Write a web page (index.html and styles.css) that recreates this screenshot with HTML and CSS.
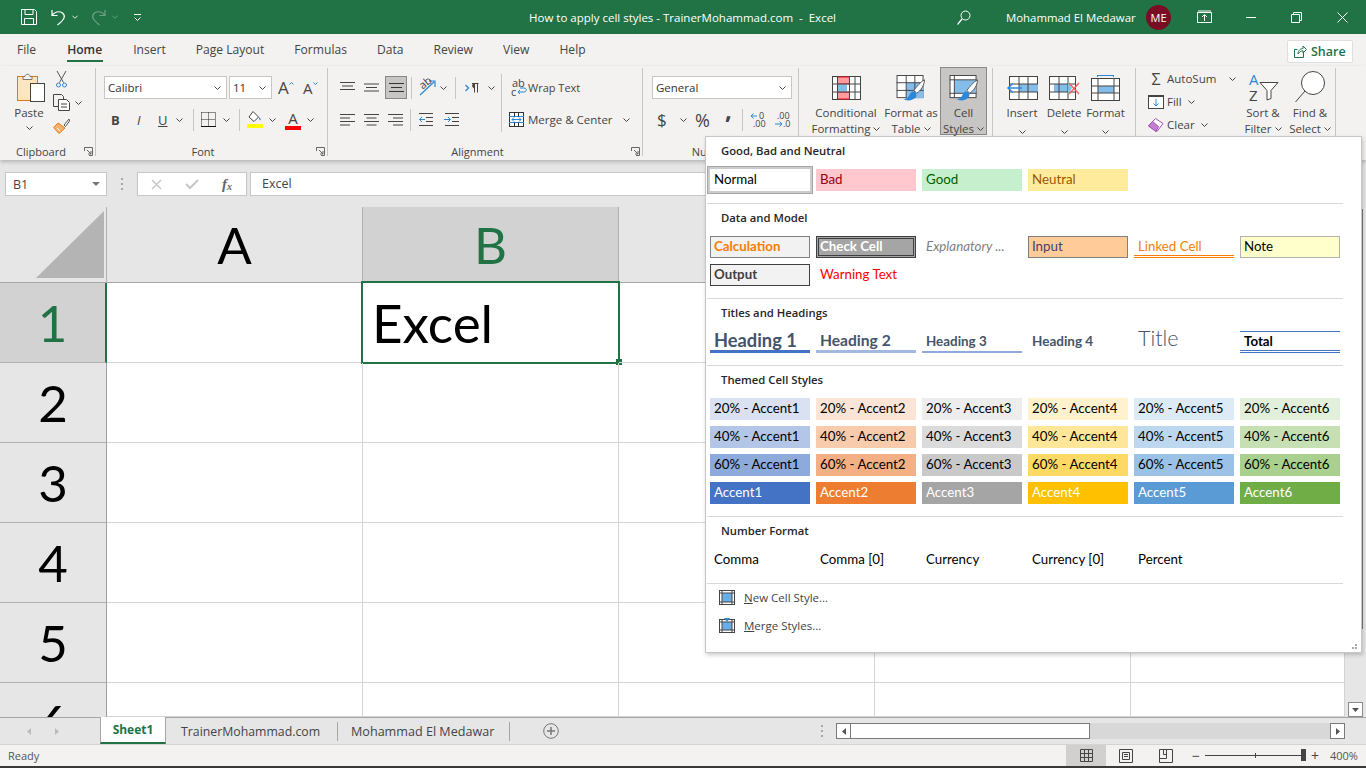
FILE: index.html
```html
<!DOCTYPE html>
<html lang="en">
<head>
<meta charset="utf-8">
<title>How to apply cell styles - Excel</title>
<link rel="stylesheet" href="styles.css">
</head>
<body>
<svg class="sprite" width="0" height="0">
  <symbol id="chev" viewBox="0 0 7 4"><path d="M.5.5l3 3 3-3" fill="none" stroke="#444" stroke-width="1"/></symbol>
  <symbol id="launch" viewBox="0 0 9 9"><path d="M.5 4V.5h8v8H5M3 3l4 4M7 4v3H4" fill="none" stroke="#666"/></symbol>
  <symbol id="lines-l" viewBox="0 0 15 13"><path d="M0 1.5h15M0 5h10M0 8.500h15M0 12h10" stroke="#444" fill="none"/></symbol>
  <symbol id="lines-c" viewBox="0 0 15 13"><path d="M0 1.500h15M2.500 5h10M0 8.500h15M2.500 12h10" stroke="#444" fill="none"/></symbol>
  <symbol id="lines-r" viewBox="0 0 15 13"><path d="M0 1.500h15M5 5h10M0 8.500h15M5 12h10" stroke="#444" fill="none"/></symbol>
</svg>

<header class="titlebar">
  <div class="qat">
    <svg width="16" height="16" viewBox="0 0 16 16"><path d="M.5.5h13l2 2v13H.5zM4 .5v5h8v-5M3.500 15.500v-6h9v6" fill="none" stroke="#fff"/></svg>
    <svg class="q-undo" width="15" height="17" viewBox="0 0 15 17"><path d="M1 1v5.500h5.500M1 6.500C3 3 8 1.500 11.500 4c3 2.500 3 6-5 12" fill="none" stroke="#fff" stroke-width="1.200"/></svg>
    <svg class="q-c" width="6" height="4" viewBox="0 0 7 4"><path d="M.5.500l3 3 3-3" fill="none" stroke="#fff"/></svg>
    <svg class="q-redo" width="15" height="17" viewBox="0 0 15 17"><path d="M14 1v5.500H8.500M14 6.500C12 3 7 1.500 3.500 4c-3 2.500-3 6 5 12" fill="none" stroke="#6ea287" stroke-width="1.200"/></svg>
    <svg class="q-c" width="6" height="4" viewBox="0 0 7 4"><path d="M.5.500l3 3 3-3" fill="none" stroke="#6ea287"/></svg>
    <svg class="q-more" width="7" height="7" viewBox="0 0 7 7"><path d="M0 .5h7M.5 3.500l3 3 3-3" fill="none" stroke="#fff"/></svg>
  </div>
  <div class="doc-title">How to apply cell styles - TrainerMohammad.com&nbsp; -&nbsp; Excel</div>
  <svg class="t-search" width="14" height="15" viewBox="0 0 14 15"><circle cx="8.500" cy="5.500" r="4.500" fill="none" stroke="#fff"/><path d="M5 9l-4.500 5.500" stroke="#fff" fill="none" stroke-width="1.200"/></svg>
  <div class="user">Mohammad El Medawar</div>
  <div class="avatar">ME</div>
  <svg class="t-disp" width="15" height="13" viewBox="0 0 15 13"><path d="M.5 2.500h14v10H.5zM1 1h13" fill="none" stroke="#fff"/><path d="M7.500 11V5M5 7l2.500-2.500L10 7" fill="none" stroke="#fff"/></svg>
  <svg class="t-min" width="10" height="1" viewBox="0 0 10 1"><path d="M0 .5h10" stroke="#fff"/></svg>
  <svg class="t-res" width="11" height="11" viewBox="0 0 11 11"><path d="M.5 2.500h8v8h-8zM2.500 2.500v-2h8v8h-2" fill="none" stroke="#fff"/></svg>
  <svg class="t-close" width="11" height="11" viewBox="0 0 11 11"><path d="M.5.500l10 10M10.500.500l-10 10" fill="none" stroke="#fff"/></svg>
</header>

<nav class="tabs">
  <span class="tab">File</span>
  <span class="tab active">Home</span>
  <span class="tab">Insert</span>
  <span class="tab">Page Layout</span>
  <span class="tab">Formulas</span>
  <span class="tab">Data</span>
  <span class="tab">Review</span>
  <span class="tab">View</span>
  <span class="tab">Help</span>
  <span class="share">
    <svg width="13" height="13" viewBox="0 0 13 13"><path d="M9.500 6.500v6h-9v-8h3M4 9c0-4 3-5.500 5-5.500V1l3.500 3.500L9 8V5.800C7 5.800 5.500 7 4 9z" fill="none" stroke="#217346"/></svg>
    Share
  </span>
</nav>

<section class="ribbon">
  <div class="group g-clip">
    <div class="body">
      <div class="big paste">
        <svg width="28" height="31" viewBox="0 0 28 31"><rect x=".5" y="4.500" width="20" height="24" fill="#fbe6bd" stroke="#d8791c"/><path d="M6 4.500h2c0-3 5-3 5 0h2v3H6z" fill="#f3f2f1" stroke="#777"/><rect x="13.500" y="11.500" width="14" height="18" fill="#fff" stroke="#444"/></svg>
        <span class="lbl">Paste</span>
        <svg class="chev" aria-hidden="true"><use href="#chev"/></svg>
      </div>
      <div class="clip-tools">
        <svg class="cut" width="11" height="17" viewBox="0 0 11 17"><path d="M1 0l6.500 11.500M10 0L3.500 11.500" stroke="#555" fill="none"/><circle cx="2.500" cy="14" r="2" fill="none" stroke="#2b88d8"/><circle cx="8.500" cy="14" r="2" fill="none" stroke="#2b88d8"/></svg>
        <div class="copy"><svg width="17" height="17" viewBox="0 0 17 17"><path d="M.5.500h8l2 2v3M.5.500v12h5" fill="none" stroke="#444"/><path d="M5.500 5.500h8l3 3v8h-11z" fill="#fff" stroke="#444"/><path d="M8 10h6M8 13h6" stroke="#444" fill="none"/></svg><svg class="chev"><use href="#chev"/></svg></div>
        <svg class="painter" width="17" height="16" viewBox="0 0 17 16"><path d="M16 1l-5 6 1.500 1.500L16.500 3z" fill="#fff" stroke="#555"/><path d="M5 5l7 5-6 5.500-5.500-6z" fill="#f6b26b" stroke="#e07c1a"/><path d="M4 10l3 3" stroke="#fff" fill="none"/></svg>
      </div>
    </div>
    <div class="glabel"><span class="gl-text gl-clip">Clipboard</span><svg class="launch"><use href="#launch"/></svg></div>
  </div>

  <div class="group g-font">
    <div class="body stack">
      <div class="row r-top">
        <div class="combo c-font"><span>Calibri</span><svg class="chev"><use href="#chev"/></svg></div>
        <div class="combo c-size"><span>11</span><svg class="chev"><use href="#chev"/></svg></div>
        <span class="grow">A<svg width="5" height="3" viewBox="0 0 5 3"><path d="M.5 2.500l2-2 2 2" fill="none" stroke="#2b88d8"/></svg></span>
        <span class="shrink">A<svg width="5" height="3" viewBox="0 0 5 3"><path d="M.5.500l2 2 2-2" fill="none" stroke="#2b88d8"/></svg></span>
      </div>
      <div class="row r-bot">
        <b class="f-b">B</b><i class="f-i">I</i><u class="f-u">U</u><svg class="chev f-uc"><use href="#chev"/></svg>
        <span class="vsep s-a"></span>
        <svg class="f-bord" width="15" height="15" viewBox="0 0 15 15"><path d="M.5.500h14M.5 7.500h14M.5.500v14M7.500.500v14M14.500.500v14" stroke="#222" stroke-dasharray="1 1" fill="none"/><path d="M0 14.500h15" stroke="#111"/></svg><svg class="chev f-bc"><use href="#chev"/></svg>
        <span class="vsep s-b"></span>
        <svg class="f-fill" width="16" height="17" viewBox="0 0 16 17"><path d="M6 .5l5.500 5.500L7 10.500 2 6z" fill="#fff" stroke="#444"/><path d="M12 6c1 1 2 2 1.500 3S12 8 12 6z" fill="#2b6cb0"/><rect y="13" width="16" height="4" fill="#ffff00"/></svg><svg class="chev f-fc"><use href="#chev"/></svg>
        <span class="f-col">A<span class="redbar"></span></span><svg class="chev f-cc"><use href="#chev"/></svg>
      </div>
    </div>
    <div class="glabel"><span class="gl-text gl-font">Font</span><svg class="launch"><use href="#launch"/></svg></div>
  </div>

  <div class="group g-align">
    <div class="body">
      <div class="stack">
        <div class="row r-top al-row">
          <svg class="al" width="15" height="12" viewBox="0 0 15 12"><path d="M0 .5h15M2 4h11M0 7.500h15" stroke="#444" fill="none"/></svg>
          <svg class="al al2" width="15" height="13" viewBox="0 0 15 13"><path d="M0 3h15M2 6.500h11M0 10h15" stroke="#444" fill="none"/></svg>
          <span class="al-sel"><svg width="15" height="11" viewBox="0 0 15 11"><path d="M0 1.500h15M2 5.500h11M0 9.500h15" stroke="#333" fill="none"/></svg></span>
          <span class="vsep s-c"></span>
          <svg class="orient" width="17" height="17" viewBox="0 0 17 17"><path d="M1 16L15 3M10 2h6v6" stroke="#2b88d8" fill="none" stroke-width="1.200"/><text x="1" y="9" class="mini" transform="rotate(-40 5 6)">ab</text></svg>
          <svg class="chev a-c1"><use href="#chev"/></svg>
          <span class="vsep s-d"></span>
          <svg class="rtl" width="14" height="10" viewBox="0 0 14 10"><path d="M.5 2l3 3-3 3" stroke="#2b88d8" fill="none" stroke-width="1.300"/><path d="M7 .5h6.500M9.500.5v9M12.500.5v9M9.500 5C7 5 7 .5 9.500.5z" stroke="#444" fill="#444"/></svg>
          <svg class="chev a-c2"><use href="#chev"/></svg>
        </div>
        <div class="row r-bot al-row">
          <svg class="al" width="15" height="13"><use href="#lines-l"/></svg>
          <svg class="al al2" width="15" height="13"><use href="#lines-c"/></svg>
          <svg class="al al3" width="15" height="13"><use href="#lines-r"/></svg>
          <span class="vsep s-e"></span>
          <svg class="ind" width="15" height="13" viewBox="0 0 15 13"><path d="M0 .5h14M7 4.500h7M7 8.500h7M0 12.500h14" stroke="#444" fill="none"/><path d="M6 6.500H.5M3 4L.5 6.500 3 9" stroke="#2b88d8" fill="none"/></svg>
          <svg class="ind ind2" width="15" height="13" viewBox="0 0 15 13"><path d="M1 .5h14M8 4.500h7M8 8.500h7M1 12.500h14" stroke="#444" fill="none"/><path d="M0 6.500h6M4 4l2.500 2.500L4 9" stroke="#2b88d8" fill="none"/></svg>
        </div>
      </div>
      <span class="vsep tall"></span>
      <div class="stack wm">
        <div class="row r-top wrap">
          <svg width="17" height="18" viewBox="0 0 17 18"><text x="1" y="8" class="mini">ab</text><text x="0" y="17" class="mini">c</text><path d="M7 13h6c3 0 3-4 0-4H9M9 11l-2 2 2 2" stroke="#2b88d8" fill="none"/></svg>
          <span class="lbl wm-t w-t">Wrap Text</span>
        </div>
        <div class="row r-bot merge">
          <svg width="15" height="15" viewBox="0 0 15 15"><rect x=".5" y=".5" width="14" height="14" fill="#fff" stroke="#333"/><path d="M0 4.500h15M0 10.500h15" stroke="#2b88d8"/><path d="M5.500.5v4M9.500.5v4M5.500 10.500v4M9.500 10.500v4" stroke="#333"/><path d="M3 7.500h9M5 5.500l-2 2 2 2M10 5.500l2 2-2 2" stroke="#2b88d8" fill="none"/></svg>
          <span class="lbl wm-t">Merge &amp; Center</span>
          <svg class="chev m-c"><use href="#chev"/></svg>
        </div>
      </div>
    </div>
    <div class="glabel"><span class="gl-text gl-al">Alignment</span><svg class="launch"><use href="#launch"/></svg></div>
  </div>

  <div class="group g-num">
    <div class="body stack">
      <div class="row r-top">
        <div class="combo c-num"><span>General</span><svg class="chev"><use href="#chev"/></svg></div>
      </div>
      <div class="row r-bot n-row">
        <span class="dollar">$</span><svg class="chev n-c"><use href="#chev"/></svg>
        <span class="pct">%</span>
        <span class="comma">,</span>
        <span class="vsep s-n"></span>
        <svg class="dec" width="16" height="16" viewBox="0 0 16 16"><path d="M1 4h6M3.500 1.500L1 4l2.500 2.500" stroke="#2b88d8" fill="none"/><text x="9" y="7" class="mini2">0</text><text x="3" y="15" class="mini2">.00</text></svg>
        <svg class="dec d2" width="16" height="16" viewBox="0 0 16 16"><text x="3" y="7" class="mini2">.00</text><path d="M1 12h7M5.500 9.500L8 12l-2.500 2.500" stroke="#2b88d8" fill="none"/><text x="9" y="15" class="mini2">.0</text></svg>
      </div>
    </div>
    <div class="glabel"><span class="gl-text gl-num">Number</span></div>
  </div>

  <div class="group g-styles">
    <div class="body big-row">
      <div class="big b-cf">
        <svg width="29" height="24" viewBox="0 0 29 24"><rect x=".5" y=".5" width="28" height="23" fill="#fff" stroke="#444"/><rect x="5.500" y="1" width="12" height="7" fill="#ff9a9f" stroke="#e81123"/><rect x="5.500" y="16" width="12" height="7" fill="#ff9a9f" stroke="#e81123"/><rect x="6" y="8.500" width="9" height="7" fill="#85bdea"/><path d="M0 8h29M0 16h29M5.500 0v24M17.500 0v24M23 0v24" stroke="#444" fill="none"/></svg>
        <span class="lbl">Conditional<br>Formatting <svg class="chev"><use href="#chev"/></svg></span>
      </div>
      <div class="big b-ft">
        <svg width="30" height="27" viewBox="0 0 30 27"><rect x=".5" y=".5" width="27" height="23" fill="#fff" stroke="#444"/><rect x="10" y="8" width="18" height="16" fill="#85bdea"/><path d="M0 8h28M0 16h28M10 0v24M19 0v24" stroke="#444" fill="none"/><path d="M29 5c-4 2-8 7-11 11l3 3c4-3 8-8 8-14z" fill="#fff" stroke="#555"/><path d="M17 17c-3 1-3 4-5 6-1 1-3 2-5 2 3 2 9 2 12-1 2-2 2-4 1-5z" fill="#2b88d8"/></svg>
        <span class="lbl">Format as<br>Table <svg class="chev"><use href="#chev"/></svg></span>
      </div>
      <div class="big b-cs">
        <svg width="30" height="27" viewBox="0 0 30 27"><rect x=".5" y=".5" width="27" height="23" fill="#fff" stroke="#444"/><rect x="5" y="5" width="22" height="14" fill="#85bdea"/><path d="M0 5h28M0 19h28M5 0v24" stroke="#444" fill="none"/><path d="M29 5c-4 2-8 7-11 11l3 3c4-3 8-8 8-14z" fill="#fff" stroke="#555"/><path d="M17 17c-3 1-3 4-5 6-1 1-3 2-5 2 3 2 9 2 12-1 2-2 2-4 1-5z" fill="#2b88d8"/></svg>
        <span class="lbl">Cell<br>Styles <svg class="chev"><use href="#chev"/></svg></span>
      </div>
    </div>
  </div>

  <div class="group g-cells">
    <div class="body big-row">
      <div class="big b-c">
        <svg width="31" height="24" viewBox="0 0 31 24"><rect x="2.500" y=".5" width="28" height="23" fill="#fff" stroke="#444"/><rect x="12" y="8" width="19" height="8" fill="#85bdea"/><path d="M2 8h29M2 16h29M12 0v24M21 0v24" stroke="#444" fill="none"/><path d="M1 12h14M6 7.500L1 12l5 4.500" stroke="#2b88d8" stroke-width="1.500" fill="#fff"/></svg>
        <span class="lbl">Insert</span><svg class="chev"><use href="#chev"/></svg>
      </div>
      <div class="big b-c">
        <svg width="31" height="24" viewBox="0 0 31 24"><rect x=".5" y=".5" width="26" height="23" fill="#fff" stroke="#444"/><rect x="5" y="8" width="14" height="8" fill="#85bdea"/><path d="M0 8h27M0 16h27M10 0v24M19 0v24" stroke="#444" fill="none"/><path d="M19 6l4 6-4 6z" fill="#85bdea"/><path d="M20 7l10 11M30 7L20 18" stroke="#ff5a5a" fill="none" stroke-width="1.300"/></svg>
        <span class="lbl">Delete</span><svg class="chev"><use href="#chev"/></svg>
      </div>
      <div class="big b-c b-last">
        <svg width="29" height="26" viewBox="0 0 29 26"><path d="M6 .5h17M6.500 0v2M22.500 0v2" stroke="#2b88d8" fill="none"/><rect x=".5" y="3.500" width="28" height="22" fill="#fff" stroke="#444"/><rect x="7" y="11" width="16" height="7" fill="#85bdea"/><path d="M0 11h29M0 18h29M7 3v23M23 3v23" stroke="#444" fill="none"/></svg>
        <span class="lbl">Format</span><svg class="chev"><use href="#chev"/></svg>
      </div>
    </div>
  </div>

  <div class="group g-edit">
    <div class="body">
      <div class="ed-list">
        <div class="ed ed1"><span class="sigma">&Sigma;</span><span class="lbl">AutoSum</span><svg class="chev a-sum"><use href="#chev"/></svg></div>
        <div class="ed ed2"><svg width="16" height="14" viewBox="0 0 16 14"><rect x=".5" y=".5" width="15" height="13" fill="#fff" stroke="#444"/><path d="M0 1.500h16" stroke="#444"/><path d="M8 4v7M5.500 8.500L8 11l2.500-2.500" stroke="#2b88d8" fill="none"/></svg><span class="lbl">Fill</span><svg class="chev"><use href="#chev"/></svg></div>
        <div class="ed ed3"><svg width="16" height="14" viewBox="0 0 16 14"><path d="M.5 8l7-7.500 7.500 5-6 8z" fill="#fff" stroke="#a44fb7"/><path d="M.5 8l4-4.500 6 5-2.500 5z" fill="#c47fd1" stroke="#a44fb7"/></svg><span class="lbl">Clear</span><svg class="chev"><use href="#chev"/></svg></div>
      </div>
      <div class="big b-sf">
        <svg width="31" height="30" viewBox="0 0 31 30"><text x="1" y="13" class="az">A</text><text x="1" y="29" class="az2">Z</text><path d="M12 10.500h18l-7 8v8l-4 1.500V18.500z" fill="#fff" stroke="#444"/></svg>
        <span class="lbl">Sort &amp;<br>Filter <svg class="chev"><use href="#chev"/></svg></span>
      </div>
      <div class="big b-fs">
        <svg width="30" height="32" viewBox="0 0 30 32"><circle cx="18" cy="12" r="11.500" fill="#fff" stroke="#444"/><path d="M10 20L.5 31" stroke="#444" fill="none"/></svg>
        <span class="lbl">Find &amp;<br>Select <svg class="chev"><use href="#chev"/></svg></span>
      </div>
    </div>
  </div>
</section>

<section class="formula">
  <div class="namebox"><span>B1</span><svg width="8" height="4" viewBox="0 0 8 4"><path d="M0 0h8L4 4z" fill="#777"/></svg></div>
  <div class="vdots"><i></i><i></i><i></i></div>
  <div class="fbtns">
    <svg width="11" height="11" viewBox="0 0 11 11"><path d="M1 1l9 9M10 1l-9 9" stroke="#c8c8c8" stroke-width="1.500" fill="none"/></svg>
    <svg width="14" height="11" viewBox="0 0 14 11"><path d="M1 5l4 4 8-8" stroke="#c8c8c8" stroke-width="2" fill="none"/></svg>
    <span class="fx">f<sub>x</sub></span>
  </div>
  <div class="finput">Excel</div>
</section>

<main class="workarea">
  <div class="sheet">
    <div class="corner"><svg width="68" height="67" viewBox="0 0 68 67"><path d="M0 67L68 0v67z" fill="#b4b4b4"/></svg></div>
    <div class="ch">A</div><div class="ch sel-col">B</div><div class="ch">C</div><div class="ch">D</div><div class="ch">E</div>
    <div class="rh sel-row">1</div><div class="cell"></div><div class="cell b1">Excel<div class="sel"><span class="handle"></span></div></div><div class="cell"></div><div class="cell"></div><div class="cell"></div>
    <div class="rh">2</div><div class="cell"></div><div class="cell"></div><div class="cell"></div><div class="cell"></div><div class="cell"></div>
    <div class="rh">3</div><div class="cell"></div><div class="cell"></div><div class="cell"></div><div class="cell"></div><div class="cell"></div>
    <div class="rh">4</div><div class="cell"></div><div class="cell"></div><div class="cell"></div><div class="cell"></div><div class="cell"></div>
    <div class="rh">5</div><div class="cell"></div><div class="cell"></div><div class="cell"></div><div class="cell"></div><div class="cell"></div>
    <div class="rh">6</div><div class="cell"></div><div class="cell"></div><div class="cell"></div><div class="cell"></div><div class="cell"></div>
  </div>
  <div class="vscroll">
    <div class="v-thumb"></div>
    <div class="v-btn"><svg width="7" height="4" viewBox="0 0 7 4"><path d="M0 0h7L3.500 4z" fill="#555"/></svg></div>
  </div>
</main>

<section class="sheetbar">
  <div class="navs">
    <svg width="4" height="7" viewBox="0 0 4 7"><path d="M4 0v7L0 3.500z" fill="#bbb"/></svg>
    <svg width="4" height="7" viewBox="0 0 4 7"><path d="M0 0v7l4-3.500z" fill="#bbb"/></svg>
  </div>
  <div class="stab on">Sheet1</div>
  <div class="stab s2">TrainerMohammad.com</div>
  <div class="stab s3">Mohammad El Medawar</div>
  <svg class="plus" width="16" height="16" viewBox="0 0 16 16"><circle cx="8" cy="8" r="7.300" fill="none" stroke="#777"/><path d="M8 4v8M4 8h8" stroke="#777" stroke-width="1.500"/></svg>
  <div class="vdots v2"><i></i><i></i><i></i></div>
  <div class="hscroll">
    <div class="h-btn"><svg width="4" height="7" viewBox="0 0 4 7"><path d="M4 0v7L0 3.500z" fill="#555"/></svg></div>
    <div class="h-thumb"></div>
    <div class="h-track"></div>
    <div class="h-btn"><svg width="4" height="7" viewBox="0 0 4 7"><path d="M0 0v7l4-3.500z" fill="#555"/></svg></div>
  </div>
</section>

<footer class="status">
  <span class="ready">Ready</span>
  <div class="viewbtn on"><svg width="13" height="13" viewBox="0 0 13 13"><path d="M.5.500h12v12H.5zM4.500.500v12M8.500.500v12M.5 4.500h12M.5 8.500h12" fill="none" stroke="#444"/></svg></div>
  <div class="viewbtn"><svg width="14" height="14" viewBox="0 0 14 14"><path d="M.5.500h13v13H.5zM3.500 3.500h7v7h-7zM5 5.500h4M5 7.500h4" fill="none" stroke="#444"/></svg></div>
  <div class="viewbtn"><svg width="14" height="14" viewBox="0 0 14 14"><path d="M.5.500h13v13H.5zM.5 9.500h7v-9M7.500 5.500h-3M4.500.500v5" fill="none" stroke="#444"/></svg></div>
  <span class="zm">&minus;</span>
  <div class="slider"><span class="tick"></span><span class="knob"></span></div>
  <span class="zm zp">+</span>
  <span class="pctz">400%</span>
</footer>
<div class="baseline"></div>

<aside class="gallery">
  <div class="sec">
    <h4>Good, Bad and Neutral</h4>
    <div class="tiles">
      <div class="t t-normal">Normal</div><div class="t t-bad">Bad</div><div class="t t-good">Good</div><div class="t t-neutral">Neutral</div>
    </div>
  </div>
  <div class="sec">
    <h4>Data and Model</h4>
    <div class="tiles">
      <div class="t t-calc">Calculation</div><div class="t t-check"><span>Check Cell</span></div><div class="t t-expl">Explanatory ...</div><div class="t t-input">Input</div><div class="t t-linked">Linked Cell</div><div class="t t-note">Note</div>
      <div class="t t-output">Output</div><div class="t t-warn">Warning Text</div>
    </div>
  </div>
  <div class="sec">
    <h4>Titles and Headings</h4>
    <div class="tiles">
      <div class="t t-h1">Heading 1</div><div class="t t-h2">Heading 2</div><div class="t t-h3">Heading 3</div><div class="t t-h4">Heading 4</div><div class="t t-title">Title</div><div class="t t-total">Total</div>
    </div>
  </div>
  <div class="sec">
    <h4>Themed Cell Styles</h4>
    <div class="tiles">
      <div class="t a1-20">20% - Accent1</div><div class="t a2-20">20% - Accent2</div><div class="t a3-20">20% - Accent3</div><div class="t a4-20">20% - Accent4</div><div class="t a5-20">20% - Accent5</div><div class="t a6-20">20% - Accent6</div>
      <div class="t a1-40">40% - Accent1</div><div class="t a2-40">40% - Accent2</div><div class="t a3-40">40% - Accent3</div><div class="t a4-40">40% - Accent4</div><div class="t a5-40">40% - Accent5</div><div class="t a6-40">40% - Accent6</div>
      <div class="t a1-60">60% - Accent1</div><div class="t a2-60">60% - Accent2</div><div class="t a3-60">60% - Accent3</div><div class="t a4-60">60% - Accent4</div><div class="t a5-60">60% - Accent5</div><div class="t a6-60">60% - Accent6</div>
      <div class="t a1">Accent1</div><div class="t a2">Accent2</div><div class="t a3">Accent3</div><div class="t a4">Accent4</div><div class="t a5">Accent5</div><div class="t a6">Accent6</div>
    </div>
  </div>
  <div class="sec">
    <h4>Number Format</h4>
    <div class="tiles">
      <div class="t">Comma</div><div class="t">Comma [0]</div><div class="t">Currency</div><div class="t">Currency [0]</div><div class="t">Percent</div>
    </div>
  </div>
  <div class="menu">
    <div class="mi"><svg width="16" height="15" viewBox="0 0 16 15"><rect x=".5" y=".5" width="15" height="14" fill="#fff" stroke="#444"/><rect x="3" y="3" width="10" height="9" fill="#6aaee8"/><path d="M0 3h16M0 12h16M3 0v15M13 0v15" stroke="#444" fill="none"/></svg><span><u>N</u>ew Cell Style...</span></div>
    <div class="mi"><svg width="16" height="15" viewBox="0 0 16 15"><rect x=".5" y="1.500" width="15" height="13" fill="#fff" stroke="#444"/><rect x="3" y="4" width="10" height="8" fill="#6aaee8"/><path d="M0 4h16M0 12h16M3 1v14M13 1v14" stroke="#444" fill="none"/><path d="M5 0h6L8 4z" fill="#2b88d8"/></svg><span><u>M</u>erge Styles...</span></div>
  </div>
  <svg class="grip" width="8" height="6" viewBox="0 0 8 6"><path d="M5 0h2v2H5zM2 3h2v2H2zM5 3h2v2H5z" fill="#aaa"/></svg>
</aside>
</body>
</html>
```
FILE: styles.css
```css
* { box-sizing: border-box; }
html, body { margin: 0; padding: 0; }
body {
  width: 1366px; height: 768px; overflow: hidden; position: relative;
  display: flex; flex-direction: column;
  font-family: "Open Sans", "Noto Sans", sans-serif; font-size: 11.5px; color: #444;
  background: #f3f2f1;
}
.sprite { position: absolute; }
svg { display: block; flex: none; overflow: visible; }
.chev { width: 7px; height: 4px; }
.lbl .chev { display: inline-block; vertical-align: 2px; }
.lbl { white-space: nowrap; }
.launch { width: 9px; height: 9px; }
.mini { font: 11px "Open Sans", sans-serif; fill: #444; }
.mini2 { font: 9px "Open Sans", sans-serif; fill: #444; }
.az { font: 15px "Open Sans", sans-serif; fill: #2b88d8; }
.az2 { font: 15px "Open Sans", sans-serif; fill: #444; }

/* title bar */
.titlebar { height: 34px; background: #217346; color: #fff; display: flex; align-items: center; flex: none; }
.qat { display: flex; align-items: center; width: 529px; padding-left: 21px; }
.q-undo { margin-left: 14px; }
.q-c { margin-left: 6px; }
.q-redo { margin-left: 13px; }
.q-more { margin-left: 16px; }
.doc-title { width: 428px; font-size: 11.500px; white-space: nowrap; }
.t-search { margin-right: 35px; }
.user { width: 140px; font-size: 11.400px; white-space: nowrap; }
.avatar { width: 25px; height: 25px; border-radius: 50%; background: #7a0c24; font-size: 11px; display: flex; align-items: center; justify-content: center; }
.t-disp { margin-left: 26px; margin-top: -2px; }
.t-min { margin-left: 34px; }
.t-res { margin-left: 35px; }
.t-close { margin-left: 35px; }

/* tabs */
.tabs { height: 32px; flex: none; display: flex; align-items: flex-start; padding: 7px 13px 0 17px; gap: 30px; font-size: 12.100px; color: #444; }
.tab { height: 21px; line-height: 17px; white-space: nowrap; }
.tab.active { font-weight: 600; border-bottom: 2px solid #217346; color: #333; margin-left: 1px; padding-right: 1px; }
.share { margin-left: auto; margin-top: -1px; width: 66px; height: 23px; background: #fff; border: 1px solid #e1dfdd; border-radius: 2px; color: #217346; display: flex; align-items: center; gap: 4px; padding-left: 6px; font-size: 12.500px; font-weight: 600; }

/* ribbon */
.ribbon { height: 94px; flex: none; display: flex; background: #f3f2f1; position: relative; z-index: 2; box-shadow: 0 2px 4px rgba(0,0,0,.22); }
.group { height: 88px; margin-top: 2px; display: flex; flex-direction: column; border-right: 1px solid #c8c6c4; flex: none; }
.body { flex: none; height: 79px; display: flex; }
.stack { display: flex; flex-direction: column; }
.row { display: flex; align-items: center; }
.r-top { height: 23px; margin-top: 8px; }
.r-bot { height: 23px; margin-top: 9px; }
.glabel { height: 9px; display: flex; align-items: center; font-size: 11px; padding-right: 2px; color: #444; white-space: nowrap; }
.gl-text { flex: 1; text-align: center; }
.gl-clip { padding-right: 2px; }
.gl-font { padding-right: 14px; }
.gl-al { padding-right: 16px; }
.gl-num { padding-right: 22px; }
.vsep { width: 1px; height: 22px; background: #c8c6c4; display: block; flex: none; }
.combo { height: 23px; background: #fff; border: 1px solid #c8c6c4; display: flex; align-items: center; justify-content: space-between; padding: 0 5px 0 3px; color: #333; font-size: 11.500px; }

.g-clip { width: 96px; }
.paste { width: 34px; margin-left: 12px; }
.big { display: flex; flex-direction: column; align-items: center; white-space: nowrap; }
.big .lbl { line-height: 16px; text-align: center; }
.paste svg:first-child { margin-top: 4px; margin-bottom: 2px; margin-left: 4px; }
.paste .chev { margin-top: 5px; }
.clip-tools { margin-left: 7px; display: flex; flex-direction: column; padding-top: 3px; }
.cut { margin-left: 3px; }
.copy { display: flex; align-items: center; gap: 5px; margin-top: 6px; }
.painter { margin-left: 0; margin-top: 7px; }

.g-font { width: 232px; padding-left: 8px; }
.c-font { width: 123px; }
.c-size { width: 43px; margin-left: 2px; }
.grow, .shrink { display: flex; align-items: flex-start; font-size: 17px; line-height: 22px; color: #444; }
.grow { margin-left: 6px; width: 25px; }
.shrink { font-size: 15px; width: 20px; }
.grow svg, .shrink svg { margin-top: 5px; }
.f-b { margin-left: 7px; width: 24px; font-size: 13px; color: #444; }
.f-i { width: 23px; font-size: 13px; color: #444; font-style: italic; padding-left: 2px; }
.f-u { width: 18px; font-size: 13px; color: #444; }
.f-uc { margin-left: 0; }
.s-a { margin-left: 10px; }
.f-bord { margin-left: 7px; }
.f-bc { margin-left: 7px; }
.s-b { margin-left: 9px; }
.f-fill { margin-left: 7px; }
.f-fc { margin-left: 6px; }
.f-col { position: relative; margin-left: 9px; width: 16px; text-align: center; font-size: 15px; line-height: 17px; height: 20px; color: #444; }
.redbar { display: block; height: 4px; background: #ff0000; margin-top: -1px; }
.f-cc { margin-left: 6px; }

.g-align { width: 315px; padding-left: 12px; }
.al2 { margin-left: 9px; }
.al3 { margin-left: 9px; }
.al-sel { width: 22px; height: 23px; margin-left: 6px; background: #c8c6c4; border: 1px solid #8a8886; display: flex; align-items: center; justify-content: center; }
.s-c { margin-left: 4px; }
.orient { margin-left: 7px; }
.a-c1 { margin-left: 4px; }
.s-d { margin-left: 8px; }
.rtl { margin-left: 9px; }
.a-c2 { margin-left: 9px; }
.s-e { margin-left: 7px; }
.ind { margin-left: 8px; }
.ind2 { margin-left: 10px; }
.tall { height: 58px; margin-left: 6px; margin-top: 6px; }
.wm { margin-left: 7px; }
.wrap { gap: 0; padding-left: 2px; }
.merge { gap: 4px; }
.merge .m-c { margin-left: 6px; }
.wm-t { font-size: 11.500px; color: #444; }
.wm-t.w-t { font-size: 11px; }

.g-num { width: 156px; padding-left: 9px; }
.c-num { width: 140px; }
.dollar { margin-left: 5px; width: 17px; font-size: 17px; color: #444; }
.n-c { margin-left: 6px; }
.pct { margin-left: 8px; width: 22px; font-size: 18px; color: #444; }
.comma { margin-left: 8px; width: 13px; font-size: 24px; font-weight: 700; line-height: 14px; margin-top: -20px; color: #444; }
.s-n { margin-left: 4px; }
.dec { margin-left: 7px; }
.d2 { margin-left: 8px; }

.g-styles { width: 194px; padding-left: 11px; }
.big-row { display: flex; align-items: flex-start; }
.big-row .big svg:first-child { margin-top: 7px; height: 26px; margin-bottom: 3px; }
.big-row .lbl { margin-top: 1px; }
.b-cf { width: 72px; }
.b-ft { width: 58px; }
.b-cs { width: 47px; height: 68px; margin-left: 0; background: #c8c6c4; border: 1px solid #8a8886; margin-top: -1px; }
.g-cells { width: 143px; padding-left: 8px; }
.b-c { width: 42px; }
.b-last { width: 43px; margin-left: -1px; }
.b-c .chev { margin-top: 9px; }
.g-edit { width: 200px; padding-left: 12px; }
.ed-list { width: 95px; display: flex; flex-direction: column; margin-top: -1px; }
.ed { height: 23px; display: flex; align-items: center; gap: 3px; }
.sigma { width: 16px; font-size: 16px; text-align: center; color: #444; }
.ed .chev { margin-left: 3px; }
.ed .a-sum { margin-left: 10px; }
.b-sf { width: 40px; }
.b-fs { width: 50px; margin-left: 2px; }
.b-sf svg:first-child { margin-top: 4px; margin-bottom: 3px; }
.b-fs svg:first-child { margin-top: 3px; margin-bottom: 2px; }

/* formula bar */
.formula { height: 47px; flex: none; background: #e6e6e6; display: flex; padding: 12px 21px 11px 5px; }
.namebox { width: 102px; height: 24px; background: #fff; border: 1px solid #c6c6c6; display: flex; align-items: center; justify-content: space-between; padding: 0 6px 0 7px; color: #444; font-size: 12.500px; }
.vdots { width: 29px; display: flex; flex-direction: column; align-items: center; justify-content: center; gap: 3px; }
.vdots i { width: 2px; height: 2px; background: #a6a6a6; display: block; }
.fbtns { width: 110px; height: 24px; background: #fff; border: 1px solid #c6c6c6; display: flex; align-items: center; gap: 23px; padding-left: 13px; margin-left: 1px; }
.fx { font: italic 700 15px "Liberation Serif", serif; color: #666; }
.fx sub { font-size: 10px; vertical-align: -1px; }
.finput { flex: 1; height: 24px; margin-left: 3px; background: #fff; border: 1px solid #c6c6c6; padding-left: 11px; line-height: 22px; font-size: 12.500px; color: #444; }

/* sheet */
.workarea { height: 510px; flex: none; display: flex; background: #fff; }
.sheet { width: 1345px; height: 510px; display: grid; grid-template-columns: 107px 256px 256px 256px 256px 214px; grid-template-rows: 76px 80px 80px 80px 80px 80px 34px; overflow: hidden; font-family: Lato, "Open Sans", sans-serif; font-size: 51px; color: #000; }
.corner { background: #e6e6e6; border-right: 1px solid #b1b1b1; border-bottom: 1px solid #a6a6a6; display: flex; justify-content: flex-end; align-items: flex-end; padding: 0 2px 4px 0; }
.ch { background: #e6e6e6; border-right: 1px solid #b1b1b1; border-bottom: 1px solid #a6a6a6; text-align: center; line-height: 76px; }
.rh { background: #e6e6e6; border-right: 1px solid #9e9e9e; border-bottom: 1px solid #b1b1b1; text-align: center; line-height: 80px; height: 80px; }
.sel-col { background: #d2d2d2; color: #217346; }
.sel-row { background: #d2d2d2; color: #217346; border-right: 2px solid #217346; }
.cell { border-right: 1px solid #d4d4d4; border-bottom: 1px solid #d4d4d4; position: relative; }
.b1 { line-height: 80px; padding-left: 9px; font-size: 53px; }
.sel { position: absolute; left: -2px; top: -2px; width: 259px; height: 83px; border: 2px solid #217346; }
.handle { position: absolute; right: -4px; bottom: -3px; width: 6px; height: 6px; background: #217346; }
.vscroll { width: 21px; background: #e6e6e6; display: flex; flex-direction: column; padding: 2px 3px 0 3px; }
.v-thumb { height: 420px; background: #fff; border: 1px solid #7a7a7a; }
.v-btn { height: 15px; margin-top: auto; background: #fff; border: 1px solid #8a8a8a; display: flex; align-items: center; justify-content: center; }

/* sheet tabs */
.sheetbar { height: 28px; flex: none; background: #e6e6e6; border-top: 1px solid #a6a6a6; border-bottom: 1px solid #d4d4d4; display: flex; align-items: stretch; padding-right: 21px; font-size: 12.300px; color: #444; }
.navs { width: 100px; flex: none; display: flex; align-items: center; gap: 24px; padding-left: 27px; }
.stab { display: flex; align-items: center; white-space: nowrap; flex: none; }
.stab.on { width: 66px; margin-top: -1px; justify-content: center; background: #fff; color: #217346; font-weight: 700; border-bottom: 2px solid #217346; border-left: 1px solid #a6a6a6; border-right: 1px solid #a6a6a6; font-size: 12px; }
.s2 { padding: 0 15px; width: 172px; margin: 4px 0 3px; border-right: 1px solid #a6a6a6; }
.s3 { padding: 0 13px; width: 172px; margin: 4px 0 3px; border-right: 1px solid #a6a6a6; font-size: 12.600px; }
.plus { margin: 5px 0 0 33px; }
.v2 { width: 20px; flex: none; margin: 0 4px 0 253px; }
.hscroll { width: 509px; flex: none; margin: 5px 0; display: flex; }
.h-btn { width: 15px; flex: none; background: #fff; border: 1px solid #7a7a7a; display: flex; align-items: center; justify-content: center; }
.h-thumb { width: 239px; flex: none; background: #fff; border: 1px solid #7a7a7a; border-left: 0; }
.h-track { flex: 1; background: #d8d8d8; }

/* status bar */
.status { height: 21px; flex: none; background: #f3f2f1; display: flex; align-items: center; font-size: 11px; color: #555; }
.ready { margin-left: 8px; width: 1058px; }
.viewbtn { width: 40px; height: 21px; display: flex; align-items: center; justify-content: center; }
.viewbtn.on { background: #d2d0ce; }
.zm { margin-left: 6px; width: 10px; font-size: 14px; color: #444; }
.zp { margin-left: 8px; }
.slider { width: 98px; height: 1px; background: #444; margin-left: 3px; position: relative; }
.tick { position: absolute; left: 50px; top: -2px; width: 1px; height: 5px; background: #444; }
.knob { position: absolute; right: -3px; top: -6px; width: 5px; height: 12px; background: #444; }
.pctz { margin-left: 9px; }
.baseline { height: 2px; flex: none; background: #3a3a3a; }

/* gallery popup */
.gallery { position: absolute; left: 705px; top: 136px; width: 657px; height: 517px; background: #fff; border: 1px solid #c6c6c6; box-shadow: 1px 2px 4px rgba(0,0,0,.2); padding: 0 0 0 4px; z-index: 5; font-family: Lato, "Open Sans", sans-serif; font-size: 13.300px; color: #000; }
.sec { margin-left: -3px; width: 636px; border-bottom: 1px solid #d9d9d9; padding: 0 0 12px 3px; }
.sec h4 { margin: 0; height: 32px; padding: 7px 0 0 11px; font: 600 11.300px/14px "Open Sans", sans-serif; color: #262626; }
.tiles { display: grid; grid-template-columns: repeat(6, 100px); grid-auto-rows: 22px; gap: 6px; }
.t { height: 22px; line-height: 20px; padding-left: 4px; white-space: nowrap; }
.t-normal { box-shadow: 0 0 0 2px #cbcbcb, 0 0 0 3px #a6a6a6; }
.t-bad { background: #ffc7ce; color: #9c0006; }
.t-good { background: #c6efce; color: #006100; }
.t-neutral { background: #ffeb9c; color: #9c5700; }
.t-calc { background: #f2f2f2; border: 1px solid #7f7f7f; color: #fa7d00; font-weight: 700; padding-left: 3px; line-height: 18px; }
.t-check { background: #a5a5a5; border: 1px solid #3f3f3f; color: #fff; font-weight: 700; padding: 1px; }
.t-check span { display: block; border: 1px solid #3f3f3f; height: 18px; line-height: 15px; padding-left: 1px; }
.t-expl { color: #7f7f7f; font-style: italic; }
.t-input { background: #ffcc99; border: 1px solid #7f7f7f; color: #3f3f76; padding-left: 3px; line-height: 18px; }
.t-linked { color: #fa7d00; border-bottom: 3px double #fa7d00; line-height: 20px; }
.t-note { background: #ffffcc; border: 1px solid #b2b2b2; padding-left: 3px; line-height: 18px; }
.t-output { background: #f2f2f2; border: 1px solid #3f3f3f; color: #3f3f3f; font-weight: 700; padding-left: 3px; line-height: 18px; }
.t-warn { color: #ff0000; }
.t-h1 { color: #44546a; font-weight: 700; font-size: 18.300px; border-bottom: 3px solid #4472c4; line-height: 18px; }
.t-h2 { color: #44546a; font-weight: 700; font-size: 15.600px; border-bottom: 3px solid #a2b8e1; line-height: 19px; }
.t-h3 { color: #44546a; font-weight: 700; font-size: 13.400px; border-bottom: 2px solid #8ea9db; line-height: 20px; }
.t-h4 { color: #44546a; font-weight: 700; font-size: 13.500px; line-height: 21px; }
.t-title { color: #44546a; font-weight: 300; font-size: 21.500px; line-height: 14px; }
.t-total { font-weight: 700; border-top: 1px solid #4472c4; border-bottom: 3px double #4472c4; line-height: 18px; color: #000; }
.a1-20 { background: #d9e1f2; } .a2-20 { background: #fce4d6; } .a3-20 { background: #ededed; } .a4-20 { background: #fff2cc; } .a5-20 { background: #ddebf7; } .a6-20 { background: #e2efda; }
.a1-40 { background: #b4c6e7; } .a2-40 { background: #f8cbad; } .a3-40 { background: #dbdbdb; } .a4-40 { background: #ffe699; } .a5-40 { background: #bdd7ee; } .a6-40 { background: #c6e0b4; }
.a1-60 { background: #8ea9db; } .a2-60 { background: #f4b084; } .a3-60 { background: #c9c9c9; } .a4-60 { background: #ffd966; } .a5-60 { background: #9bc2e6; } .a6-60 { background: #a9d08e; }
.a1, .a2, .a3, .a4, .a5, .a6 { color: #fff; }
.a1 { background: #4472c4; } .a2 { background: #ed7d31; } .a3 { background: #a5a5a5; } .a4 { background: #ffc000; } .a5 { background: #5b9bd5; } .a6 { background: #70ad47; }
.menu { font: 11.500px "Open Sans", sans-serif; color: #444; }
.mi { height: 28px; display: flex; align-items: center; gap: 9px; padding: 0 0 2px 9px; }
.grip { position: absolute; right: 3px; bottom: 2px; }
```
